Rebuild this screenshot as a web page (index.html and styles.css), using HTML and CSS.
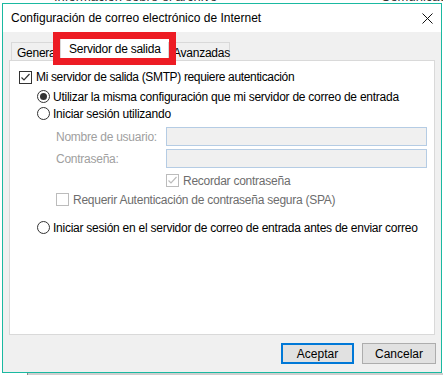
FILE: index.html
```html
<!DOCTYPE html>
<html lang="es">
<head>
    <meta charset="UTF-8">
    <meta name="viewport" content="width=device-width, initial-scale=1.0">
    <title>Configuración de correo electrónico de Internet</title>
    <link rel="stylesheet" href="styles.css">
</head>
<body>
    <!-- Outlook window behind the dialog, only its edges show -->
    <div class="app-top">
        <span class="app-left">Información sobre el archivo</span>
        <span class="app-right">Comunicación</span>
    </div>
    <div class="app-fill"></div>
    <div class="app-bottom"></div>

    <div class="dialog">
        <div class="titlebar">
            <span class="title">Configuración de correo electrónico de Internet</span>
            <svg class="close" width="11" height="11" viewBox="0 0 11 11">
                <path d="M0.5 0.5 L10.5 10.5 M10.5 0.5 L0.5 10.5" stroke="#111" stroke-width="1" fill="none"/>
            </svg>
        </div>

        <div class="dialog-body">
            <div class="tabs">
                <div class="tab tab-general">General</div>
                <div class="tab tab-out selected">Servidor de salida</div>
                <div class="tab tab-adv">Avanzadas</div>
            </div>

            <div class="panel">
                <div class="row check-row">
                    <span class="checkbox">
                        <svg width="11" height="11" viewBox="0 0 11 11"><path d="M1.5 5.5 L4 8 L9.5 2" stroke="#333" stroke-width="1.2" fill="none"/></svg>
                    </span>
                    <span class="tight">Mi servidor de salida (SMTP) requiere autenticación</span>
                </div>
                <div class="row radio-row indent-1 first-radio">
                    <span class="radio checked"></span>
                    <span>Utilizar la misma configuración que mi servidor de correo de entrada</span>
                </div>
                <div class="row radio-row indent-1">
                    <span class="radio"></span>
                    <span>Iniciar sesión utilizando</span>
                </div>
                <div class="row field-row indent-2 user-row">
                    <label class="field-label" for="user">Nombre de usuario:</label>
                    <input class="field" type="text" id="user" disabled>
                </div>
                <div class="row field-row indent-2 pass-row">
                    <label class="field-label" for="pass">Contraseña:</label>
                    <input class="field" type="password" id="pass" disabled>
                </div>
                <div class="row check-row-sm remember-row">
                    <span class="checkbox disabled">
                        <svg width="11" height="11" viewBox="0 0 11 11"><path d="M1.5 5.5 L4 8 L9.5 2" stroke="#bcbcbc" stroke-width="1.2" fill="none"/></svg>
                    </span>
                    <span class="muted">Recordar contraseña</span>
                </div>
                <div class="row check-row-sm indent-2 spa-row">
                    <span class="checkbox disabled"></span>
                    <span class="muted">Requerir Autenticación de contraseña segura (SPA)</span>
                </div>
                <div class="row radio-row indent-1 last-radio">
                    <span class="radio"></span>
                    <span>Iniciar sesión en el servidor de correo de entrada antes de enviar correo</span>
                </div>
            </div>

            <div class="footer">
                <button class="btn btn-default">Aceptar</button>
                <button class="btn btn-cancel">Cancelar</button>
            </div>
        </div>

        <!-- red annotation box drawn over the selected tab -->
        <div class="callout"></div>
    </div>
</body>
</html>
```

FILE: styles.css
```css
body {
    margin: 0;
    width: 443px;
    height: 375px;
    overflow: hidden;
    position: relative;
    background: #fff;
    font-family: "Segoe UI", "Liberation Sans", Arial, sans-serif;
    font-size: 12px;
    color: #000;
    display: flex;
    flex-direction: column;
}
.app-top {
    height: 3px;
    overflow: hidden;
    display: flex;
    color: #333;
    font-size: 13px;
}
.app-left {
    margin: -11px 0 0 54px;
}
.app-right {
    margin: -11px 0 0 auto;
    width: 62px;
    white-space: nowrap;
}
.app-fill {
    flex: 1;
}
.app-bottom {
    height: 2px;
    background: #cfcfcf;
    margin-left: 27px;
    border-left: 1px solid #8a8a8a;
}

.dialog {
    position: absolute;
    left: 2px;
    top: 3px;
    width: 438px;
    height: 368px;
    border: 1px solid #1ab9a1;
    background: #f0f0f0;
    display: flex;
    flex-direction: column;
}
.titlebar {
    height: 28px;
    background: #fff;
    display: flex;
    align-items: center;
    padding: 0 8px;
    font-size: 12px;
}
.close {
    margin-left: auto;
}
.dialog-body {
    flex: 1;
    padding: 6px 6px 0 6px;
    display: flex;
    flex-direction: column;
    letter-spacing: -0.25px;
}

.tabs {
    height: 22px;
    display: flex;
    align-items: flex-end;
    padding-left: 2px;
    position: relative;
    z-index: 1;
}
.tab {
    height: 18px;
    box-sizing: border-box;
    border: 1px solid #d9d9d9;
    border-bottom: none;
    background: #f0f0f0;
    display: flex;
    align-items: center;
    padding: 2px 0 0 5px;
    white-space: nowrap;
}
.tab-general {
    width: 51px;
    overflow: hidden;
}
.tab-out {
    width: 110px;
    margin: 0 -2px -1px -2px;
}
.tab-adv {
    width: 62px;
    padding-left: 4px;
}
.tab.selected {
    height: 23px;
    background: #fff;
    padding: 0 0 3px 8px;
}

.panel {
    height: 275px;
    box-sizing: border-box;
    border: 1px solid #d9d9d9;
    background: #fff;
    padding: 7px 0 0 9px;
}
.row {
    display: flex;
    align-items: center;
    white-space: nowrap;
}
.tight {
    letter-spacing: -0.35px;
}
.check-row {
    height: 18px;
}
.check-row-sm {
    height: 17px;
}
.radio-row {
    height: 17px;
}
.indent-1 {
    padding-left: 18px;
}
.indent-2 {
    padding-left: 37px;
}
.first-radio {
    margin-top: 2px;
}
.user-row {
    margin-top: 5px;
}
.pass-row {
    margin-top: 3px;
}
.remember-row {
    margin-top: 4px;
    padding-left: 147px;
}
.spa-row {
    margin-top: 2px;
}
.last-radio {
    margin-top: 11px;
}

.checkbox {
    width: 13px;
    height: 13px;
    box-sizing: border-box;
    border: 1px solid #333;
    background: #fff;
    margin-right: 4px;
    display: flex;
    align-items: center;
    justify-content: center;
    flex: none;
}
.checkbox.disabled {
    border-color: #bcbcbc;
}
.radio {
    width: 13px;
    height: 13px;
    box-sizing: border-box;
    border: 1px solid #333;
    border-radius: 50%;
    background: #fff;
    margin-right: 3px;
    display: flex;
    align-items: center;
    justify-content: center;
    flex: none;
}
.radio.checked::after {
    content: "";
    width: 7px;
    height: 7px;
    border-radius: 50%;
    background: #333;
}

.field-row {
    height: 19px;
}
.field-label {
    width: 110px;
    color: #a0a0a0;
}
.field {
    width: 261px;
    height: 19px;
    box-sizing: border-box;
    border: 1px solid #b5cce4;
    background: #f0f0f0;
    padding: 0;
    margin: 0;
}
.muted {
    color: #6d6d6d;
}

.footer {
    display: flex;
    justify-content: flex-end;
    gap: 8px;
    margin-top: 8px;
    margin-right: -1px;
}
.btn {
    height: 21px;
    box-sizing: border-box;
    background: #e1e1e1;
    border: 1px solid #adadad;
    font: inherit;
    color: #000;
    padding: 0;
}
.btn-default {
    width: 73px;
    border: 2px solid #0078d7;
}
.btn-cancel {
    width: 74px;
}

.callout {
    position: absolute;
    left: 50px;
    top: 28px;
    width: 123px;
    height: 33px;
    box-sizing: border-box;
    border: 7px solid #ed1c24;
    z-index: 2;
}
```
